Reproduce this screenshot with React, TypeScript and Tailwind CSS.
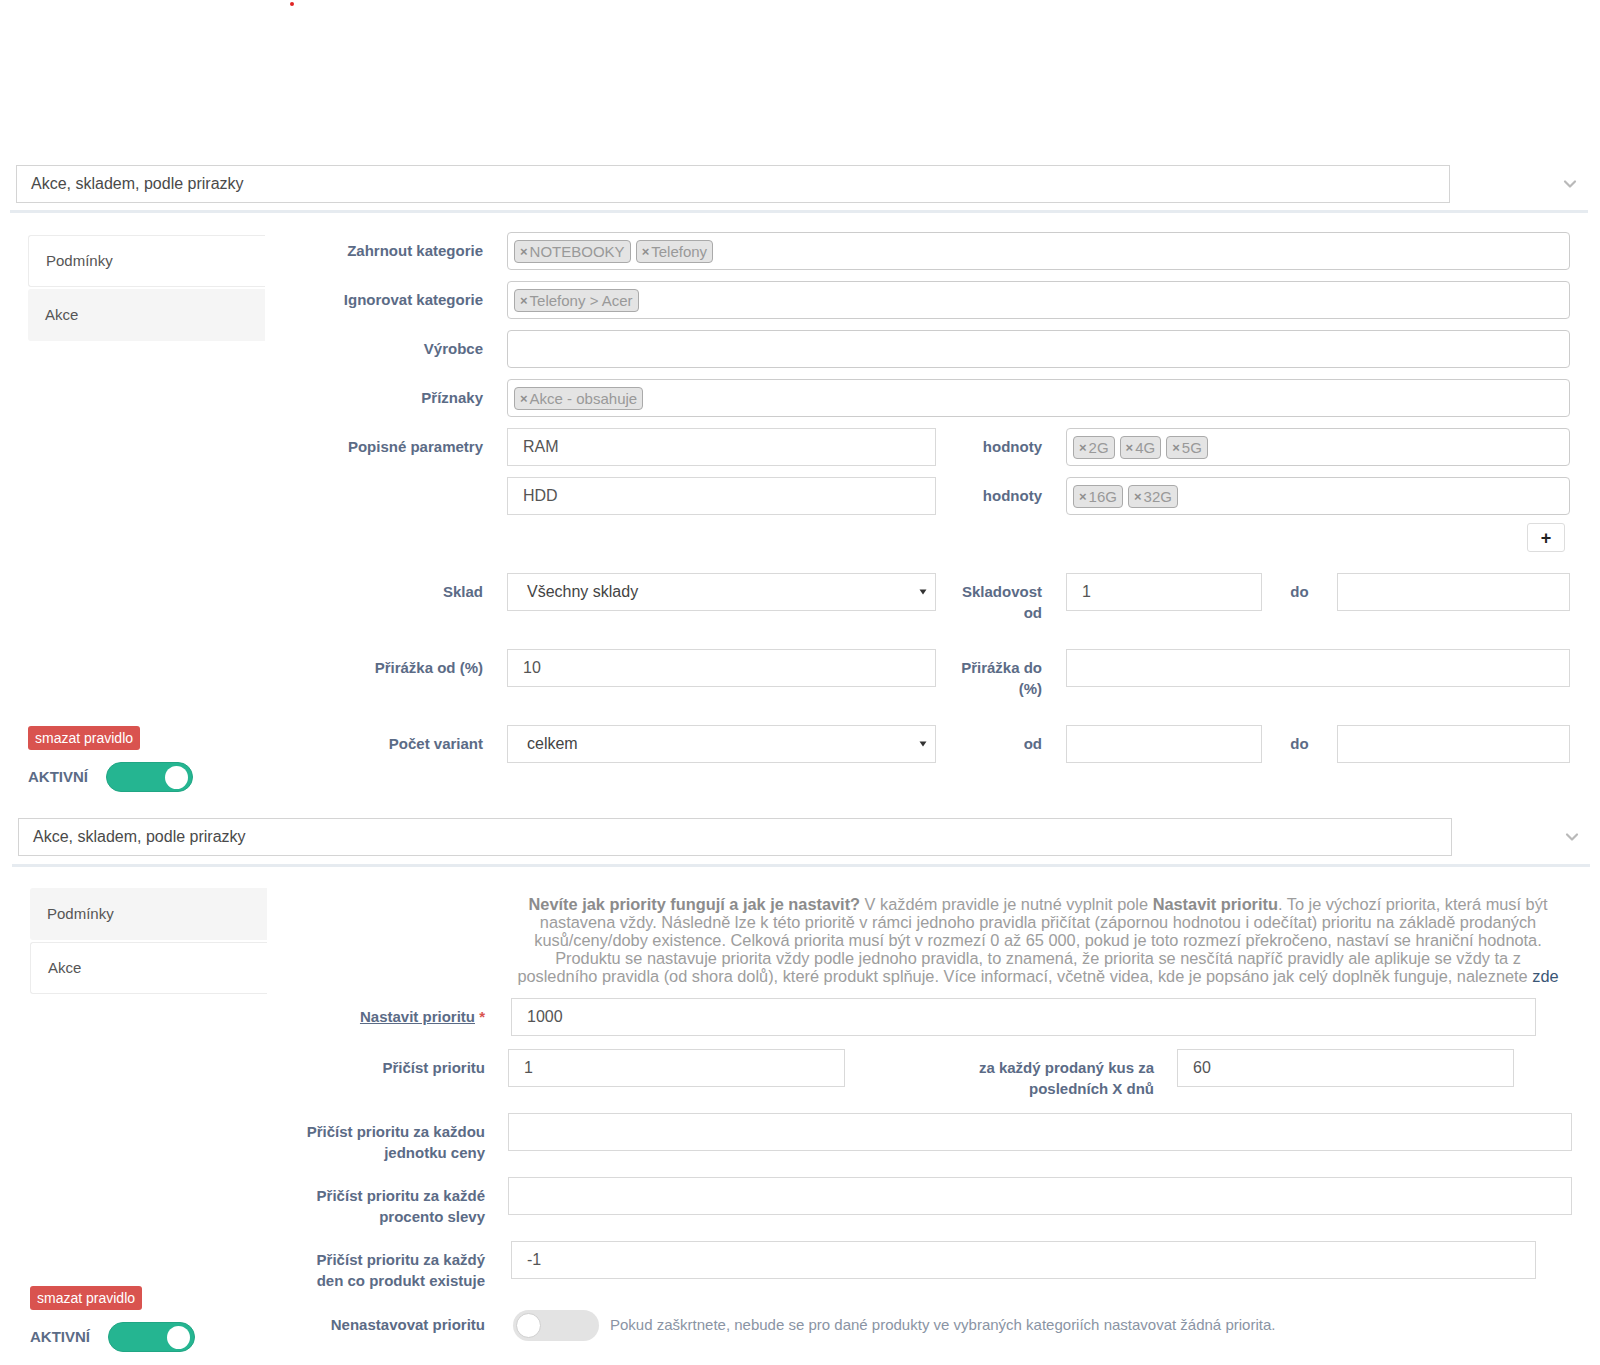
import React from "react";
import { ChevronDown } from "lucide-react";

const LBL = "text-[15px] font-bold text-[#5b6b86] leading-[21px] text-right pt-[8px]";
const DO = "text-[15px] font-bold text-[#5b6b86] leading-[21px] text-center pt-[8px] w-[75px]";

function Tag({ text }: { text: string }) {
  return (
    <span className="inline-flex items-center h-[23px] px-[5px] rounded-[4px] border border-[#aaa] bg-[#e4e4e4] text-[#999] text-[15px] leading-none whitespace-nowrap">
      <span className="font-bold text-[#8f8f8f] text-[13px] mr-[2px]">×</span>
      {text}
    </span>
  );
}

function TagInput({ tags, className = "" }: { tags: string[]; className?: string }) {
  return (
    <div className={"flex items-center gap-[5px] h-[38px] px-[6px] border border-[#ccc] rounded-[4px] bg-white " + className}>
      {tags.map((t) => (
        <Tag key={t} text={t} />
      ))}
    </div>
  );
}

function TextInput({ value = "", className = "" }: { value?: string; className?: string }) {
  return (
    <div className={"h-[38px] border border-[#d9d9d9] flex items-center px-[15px] text-[16px] text-[#555] bg-white " + className}>
      {value}
    </div>
  );
}

function Select({ value, className = "" }: { value: string; className?: string }) {
  return (
    <div className={"h-[38px] border border-[#d9d9d9] flex items-center justify-between pl-[19px] pr-[8px] text-[16px] text-[#444] bg-white " + className}>
      <span>{value}</span>
      <svg width="8" height="6" viewBox="0 0 8 6">
        <path d="M0.5 0.5 L7.5 0.5 L4 5.5 Z" fill="#333" />
      </svg>
    </div>
  );
}

function Toggle({ on }: { on: boolean }) {
  if (on) {
    return (
      <div className="w-[87px] h-[30px] rounded-full bg-[#25b591] border border-[#21a684] flex items-center justify-end pr-[4px]">
        <div className="w-[23px] h-[23px] rounded-full bg-white" />
      </div>
    );
  }
  return (
    <div className="w-[86px] h-[31px] rounded-full bg-[#e3e3e3] flex items-center pl-[3px]">
      <div className="w-[25px] h-[25px] rounded-full bg-white border border-[#cfcfcf]" />
    </div>
  );
}

function Header({ shift }: { shift: boolean }) {
  return (
    <div>
      <div className={"flex items-center " + (shift ? "pl-[18px]" : "pl-[16px]")}>
        <div className="w-[1434px] h-[38px] border border-[#d4d4d4] flex items-center pl-[14px] text-[16px] text-[#4a4a4a]">
          Akce, skladem, podle prirazky
        </div>
        <ChevronDown className="ml-[110px] text-[#b9b9b9]" size={20} strokeWidth={2.6} />
      </div>
      <div className={"h-[3px] bg-[#e6ebf0] w-[1578px] " + (shift ? "mt-[8px] ml-[12px]" : "mt-[7px] ml-[10px]")} />
    </div>
  );
}

function LeftCol({ activeFirst, shift }: { activeFirst: boolean; shift: boolean }) {
  const white = "h-[52px] flex items-center pl-[17px] text-[15px] text-[#555] bg-white border-t border-l border-b border-[#ececec] rounded-l-[3px]";
  const gray = "h-[52px] flex items-center pl-[17px] text-[15px] text-[#555] bg-[#f5f5f5] rounded-l-[3px]";
  return (
    <div className={"w-[237px] flex flex-col " + (shift ? "ml-[30px] pt-[21px]" : "ml-[28px] pt-[22px]")}>
      <div className={activeFirst ? white : gray}>Podmínky</div>
      <div className={(activeFirst ? gray : white) + " mt-[2px]"}>Akce</div>
      <div className="mt-auto">
        <div className="inline-flex items-center h-[24px] px-[7px] rounded-[3px] bg-[#d9534f] text-white text-[14px]">
          smazat pravidlo
        </div>
        <div className="flex items-center mt-[12px]">
          <span className="text-[15px] font-bold text-[#5b6b86] w-[78px]">AKTIVNÍ</span>
          <Toggle on={true} />
        </div>
      </div>
    </div>
  );
}

function Section1() {
  return (
    <div className="flex">
      <LeftCol activeFirst={true} shift={false} />
      <div className="flex-1 pl-[26px] pr-[30px] pt-[19px] pb-[29px] flex flex-col">
        <div className="flex items-start h-[38px]">
          <div className={LBL + " w-[192px]"}>Zahrnout kategorie</div>
          <TagInput tags={["NOTEBOOKY", "Telefony"]} className="ml-[24px] flex-1" />
        </div>
        <div className="flex items-start h-[38px] mt-[11px]">
          <div className={LBL + " w-[192px]"}>Ignorovat kategorie</div>
          <TagInput tags={["Telefony > Acer"]} className="ml-[24px] flex-1" />
        </div>
        <div className="flex items-start h-[38px] mt-[11px]">
          <div className={LBL + " w-[192px]"}>Výrobce</div>
          <TagInput tags={[]} className="ml-[24px] flex-1" />
        </div>
        <div className="flex items-start h-[38px] mt-[11px]">
          <div className={LBL + " w-[192px]"}>Příznaky</div>
          <TagInput tags={["Akce - obsahuje"]} className="ml-[24px] flex-1" />
        </div>
        <div className="flex items-start h-[38px] mt-[11px]">
          <div className={LBL + " w-[192px]"}>Popisné parametry</div>
          <TextInput value="RAM" className="ml-[24px] w-[429px]" />
          <div className={LBL + " w-[86px] ml-[20px]"}>hodnoty</div>
          <TagInput tags={["2G", "4G", "5G"]} className="ml-[24px] flex-1" />
        </div>
        <div className="flex items-start h-[38px] mt-[11px]">
          <div className="w-[192px]" />
          <TextInput value="HDD" className="ml-[24px] w-[429px]" />
          <div className={LBL + " w-[86px] ml-[20px]"}>hodnoty</div>
          <TagInput tags={["16G", "32G"]} className="ml-[24px] flex-1" />
        </div>
        <div className="flex justify-end mt-[8px] pr-[5px]">
          <div className="w-[38px] h-[29px] border border-[#ddd] rounded-[3px] bg-white flex items-center justify-center text-[18px] font-bold text-[#222] leading-none">
            +
          </div>
        </div>
        <div className="flex items-start h-[38px] mt-[21px]">
          <div className={LBL + " w-[192px]"}>Sklad</div>
          <Select value="Všechny sklady" className="ml-[24px] w-[429px]" />
          <div className={LBL + " w-[86px] ml-[20px]"}>Skladovost od</div>
          <TextInput value="1" className="ml-[24px] w-[196px]" />
          <div className={DO}>do</div>
          <TextInput className="flex-1" />
        </div>
        <div className="flex items-start h-[38px] mt-[38px]">
          <div className={LBL + " w-[192px]"}>Přirážka od (%)</div>
          <TextInput value="10" className="ml-[24px] w-[429px]" />
          <div className={LBL + " w-[86px] ml-[20px]"}>Přirážka do (%)</div>
          <TextInput className="ml-[24px] flex-1" />
        </div>
        <div className="flex items-start h-[38px] mt-[38px]">
          <div className={LBL + " w-[192px]"}>Počet variant</div>
          <Select value="celkem" className="ml-[24px] w-[429px]" />
          <div className={LBL + " w-[86px] ml-[20px]"}>od</div>
          <TextInput className="ml-[24px] w-[196px]" />
          <div className={DO}>do</div>
          <TextInput className="flex-1" />
        </div>
      </div>
    </div>
  );
}

function Section2() {
  return (
    <div className="flex">
      <LeftCol activeFirst={false} shift={true} />
      <div className="flex-1 pl-[26px] pr-[28px] pt-[28px] pb-[11px] flex flex-col">
        <div className="flex">
          <div className="w-[192px]" />
          <p className="ml-[29px] mr-[10px] flex-1 text-center text-[16.35px] leading-[18px] text-[#9d9d9d]">
            <b className="text-[#8c8c8c]">Nevíte jak priority fungují a jak je nastavit?</b> V každém pravidle je nutné vyplnit pole{" "}
            <b className="text-[#8c8c8c]">Nastavit prioritu</b>. To je výchozí priorita, která musí být nastavena vždy. Následně lze k této prioritě v rámci jednoho pravidla přičítat (zápornou hodnotou i odečítat) prioritu na základě prodaných kusů/ceny/doby existence. Celková priorita musí být v rozmezí 0 až 65 000, pokud je toto rozmezí překročeno, nastaví se hraniční hodnota. Produktu se nastavuje priorita vždy podle jednoho pravidla, to znamená, že priorita se nesčítá napříč pravidly ale aplikuje se vždy ta z posledního pravidla (od shora dolů), které produkt splňuje. Více informací, včetně videa, kde je popsáno jak celý doplněk funguje, naleznete{" "}
            <span className="text-[#3a5676]">zde</span>
          </p>
        </div>
        <div className="flex items-start h-[38px] mt-[13px]">
          <div className={LBL + " w-[192px]"}>
            <span className="underline">Nastavit prioritu</span> <span className="text-[#d9534f]">*</span>
          </div>
          <TextInput value="1000" className="ml-[26px] w-[1025px]" />
        </div>
        <div className="flex items-start h-[38px] mt-[13px]">
          <div className={LBL + " w-[192px]"}>Přičíst prioritu</div>
          <TextInput value="1" className="ml-[23px] w-[337px]" />
          <div className={LBL + " w-[200px] ml-[109px]"}>za každý prodaný kus za posledních X dnů</div>
          <TextInput value="60" className="ml-[23px] w-[337px]" />
        </div>
        <div className="flex items-start h-[38px] mt-[26px]">
          <div className={LBL + " w-[192px]"}>Přičíst prioritu za každou jednotku ceny</div>
          <TextInput className="ml-[23px] flex-1" />
        </div>
        <div className="flex items-start h-[38px] mt-[26px]">
          <div className={LBL + " w-[192px]"}>Přičíst prioritu za každé procento slevy</div>
          <TextInput className="ml-[23px] flex-1" />
        </div>
        <div className="flex items-start h-[38px] mt-[26px]">
          <div className={LBL + " w-[192px]"}>Přičíst prioritu za každý den co produkt existuje</div>
          <TextInput value="-1" className="ml-[26px] w-[1025px]" />
        </div>
        <div className="flex items-center h-[31px] mt-[31px]">
          <div className="w-[192px] text-[15px] font-bold text-[#5b6b86] text-right">Nenastavovat prioritu</div>
          <div className="ml-[28px]">
            <Toggle on={false} />
          </div>
          <span className="ml-[11px] text-[15px] text-[#8a94a4]">
            Pokud zaškrtnete, nebude se pro dané produkty ve vybraných kategoriích nastavovat žádná priorita.
          </span>
        </div>
      </div>
    </div>
  );
}

export default function App() {
  return (
    <div className="w-[1600px] min-h-[1365px] bg-white font-['Liberation_Sans',Arial,sans-serif]">
      <div className="h-[165px] pt-[2px] pl-[290px]">
        <div className="w-[4px] h-[4px] rounded-full bg-[#e02424]" />
      </div>
      <Header shift={false} />
      <Section1 />
      <div className="mt-[26px]">
        <Header shift={true} />
      </div>
      <Section2 />
    </div>
  );
}
